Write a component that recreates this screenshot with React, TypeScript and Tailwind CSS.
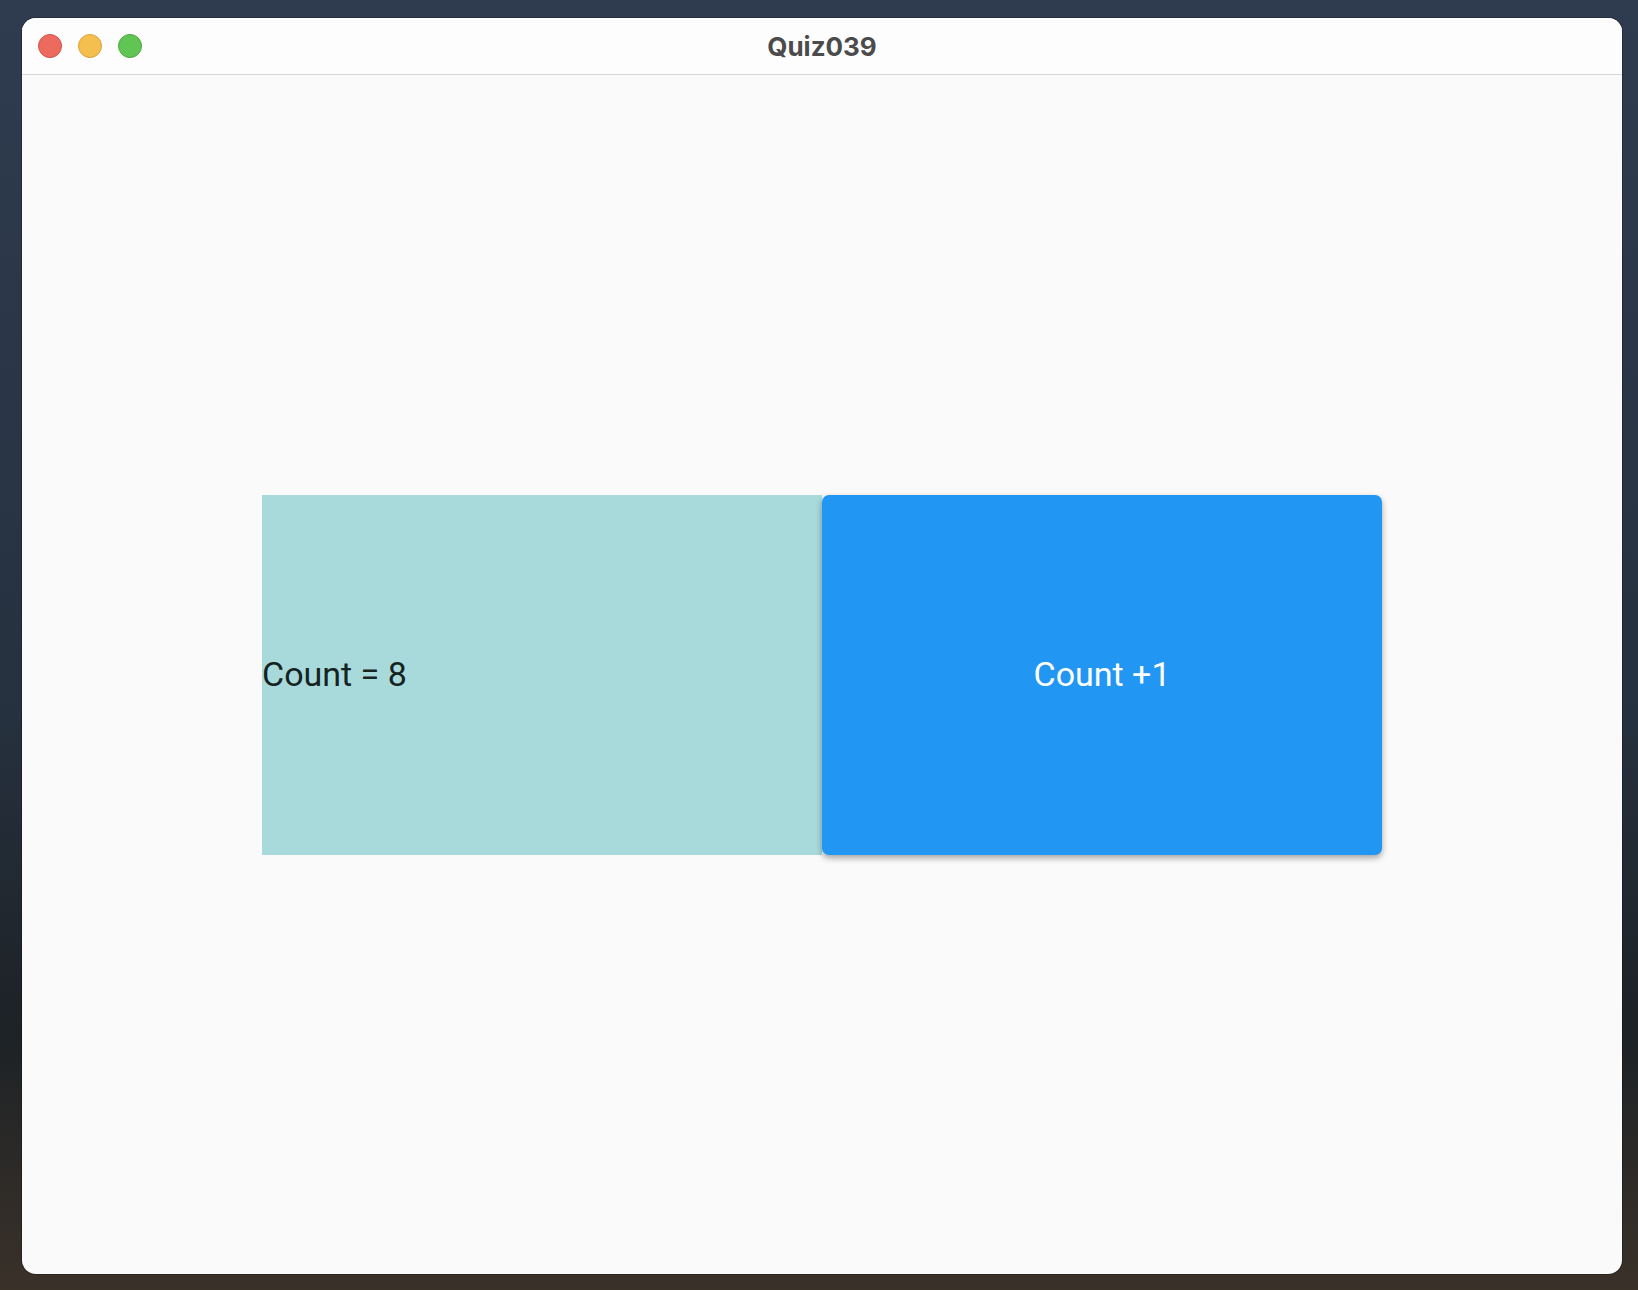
export default function App() {
    return (
        <div className="w-[1638px] h-[1290px] overflow-hidden bg-[linear-gradient(180deg,#2f3c50_0%,#26313f_55%,#1d2226_80%,#3a3129_100%)] pt-[18px] pl-[22px]">
            <div className="w-[1600px] h-[1256px] rounded-[14px] overflow-hidden bg-[#fafafa] flex flex-col shadow-[0_0_0_1px_rgba(0,0,0,0.25)]">
                {/* Title bar */}
                <div className="relative h-[57px] shrink-0 bg-[#fdfdfd] border-b border-[#d6d6d6] flex items-center justify-center">
                    <div className="absolute left-[16px] top-[16px] flex gap-[16px]">
                        <span className="w-[24px] h-[24px] rounded-full bg-[#ec6a5e] border border-[#d25246]" />
                        <span className="w-[24px] h-[24px] rounded-full bg-[#f4bf4f] border border-[#d8a23c]" />
                        <span className="w-[24px] h-[24px] rounded-full bg-[#61c554] border border-[#4ba83f]" />
                    </div>
                    <span className="text-[26px] font-bold text-[#4b4b4b] font-['Inter',sans-serif]">
                        Quiz039
                    </span>
                </div>

                {/* Content */}
                <div className="flex-1 flex items-center justify-center">
                    <div className="w-[1120px] h-[360px] flex font-['Roboto',sans-serif] text-[34px]">
                        <div className="w-1/2 h-full bg-[#a8dadc] flex items-center text-[#152321]">
                            Count = 8
                        </div>
                        <button
                            type="button"
                            className="w-1/2 h-full rounded-[7px] bg-[#2196f3] text-white flex items-center justify-center shadow-[0_3px_6px_rgba(0,0,0,0.35)]"
                        >
                            Count +1
                        </button>
                    </div>
                </div>
            </div>
        </div>
    )
}
